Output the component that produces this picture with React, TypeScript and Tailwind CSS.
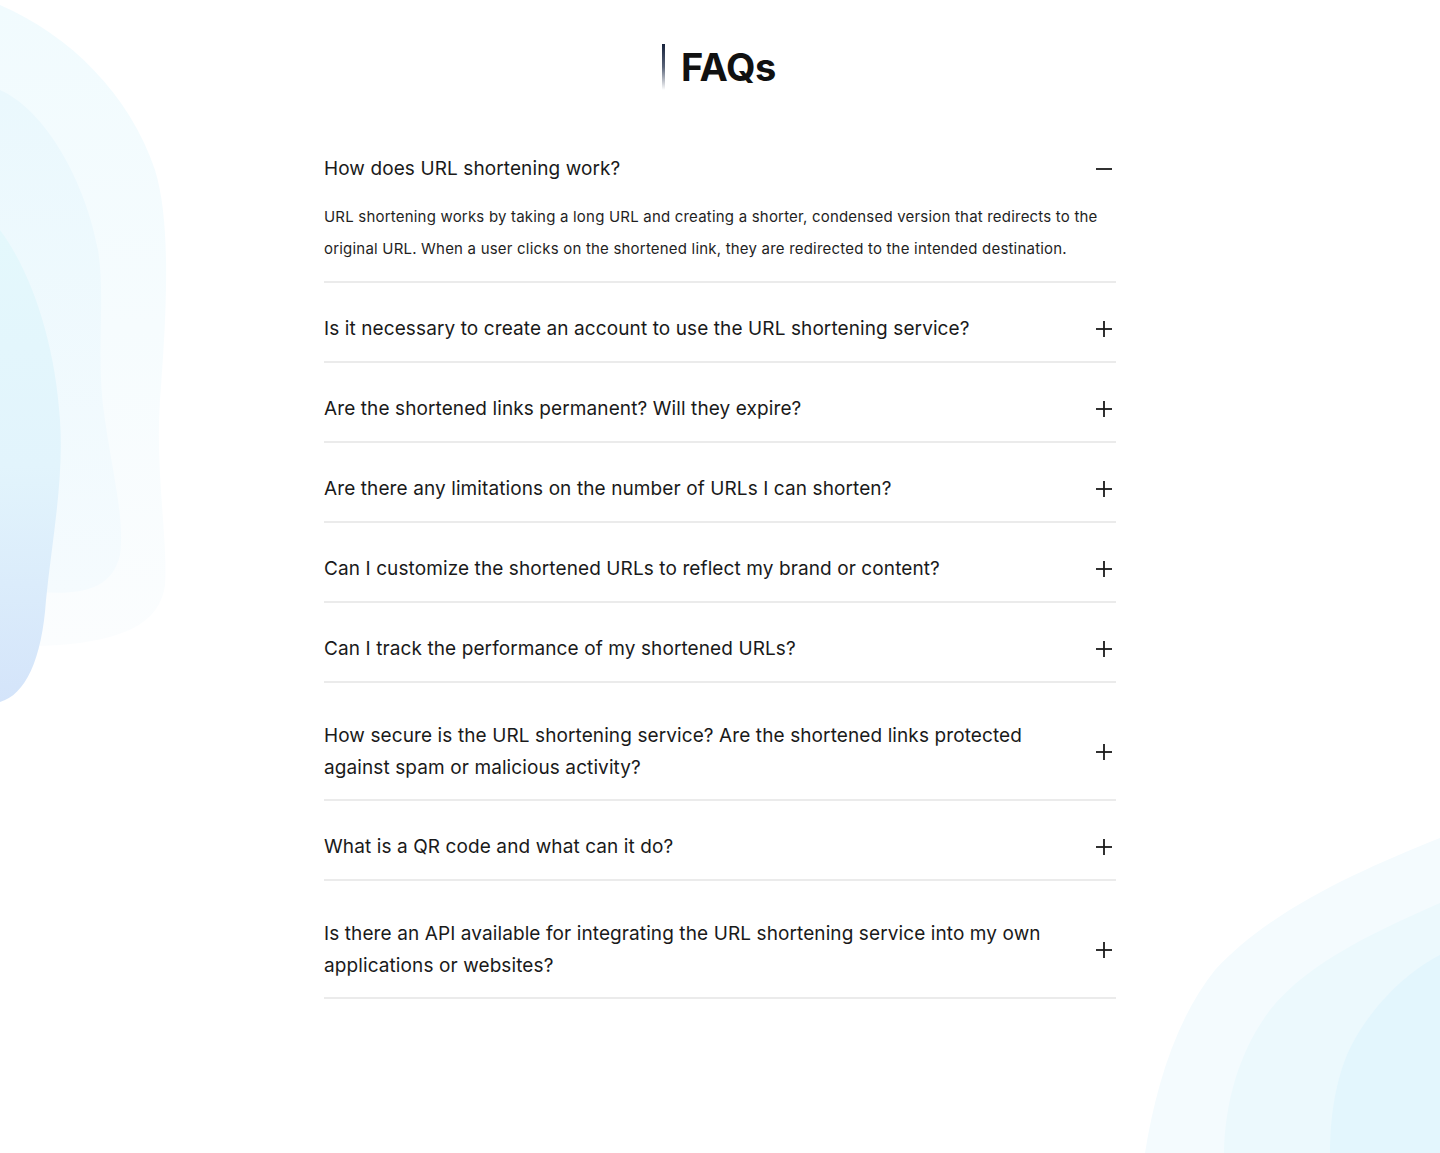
import { useState } from 'react';

type Faq = { q: string; a?: string; tall?: boolean };

const faqs: Faq[] = [
  {
    q: 'How does URL shortening work?',
    a: 'URL shortening works by taking a long URL and creating a shorter, condensed version that redirects to the original URL. When a user clicks on the shortened link, they are redirected to the intended destination.',
  },
  { q: 'Is it necessary to create an account to use the URL shortening service?' },
  { q: 'Are the shortened links permanent? Will they expire?' },
  { q: 'Are there any limitations on the number of URLs I can shorten?' },
  { q: 'Can I customize the shortened URLs to reflect my brand or content?' },
  { q: 'Can I track the performance of my shortened URLs?' },
  {
    q: 'How secure is the URL shortening service? Are the shortened links protected against spam or malicious activity?',
    tall: true,
  },
  { q: 'What is a QR code and what can it do?' },
  {
    q: 'Is there an API available for integrating the URL shortening service into my own applications or websites?',
    tall: true,
  },
];

const PlusIcon = ({ open }: { open: boolean }) => (
  <svg
    className="shrink-0"
    width="18"
    height="18"
    viewBox="0 0 18 18"
    fill="none"
    stroke="#1a1a1a"
    strokeWidth="1.8"
  >
    <path d="M1 9h16" />
    {!open && <path d="M9 1v16" />}
  </svg>
);

const LeftBlobs = () => (
  <svg className="absolute left-0 top-0" width="170" height="710" viewBox="0 0 170 710" fill="none">
    <defs>
      <linearGradient id="lbOuter" x1="0" y1="0" x2="0" y2="1">
        <stop offset="0" stopColor="#f1fbfe" />
        <stop offset="1" stopColor="#fbfdfe" />
      </linearGradient>
      <linearGradient id="lbMid" x1="0" y1="0" x2="0" y2="1">
        <stop offset="0" stopColor="#eaf8fd" />
        <stop offset="1" stopColor="#f5fbfe" />
      </linearGradient>
      <linearGradient id="lbInner" x1="0" y1="0" x2="0" y2="1">
        <stop offset="0" stopColor="#e4f8fc" />
        <stop offset="0.5" stopColor="#e2f4fc" />
        <stop offset="1" stopColor="#d4e4fa" />
      </linearGradient>
    </defs>
    <path
      d="M0 5C70 35 130 95 155 170C172 225 166 320 160 400C155 470 168 540 165 585C160 625 120 640 60 645L0 648Z"
      fill="url(#lbOuter)"
    />
    <path
      d="M0 90C45 110 85 180 98 250C106 300 95 360 105 420C112 470 125 520 120 555C112 590 80 595 40 592L0 590Z"
      fill="url(#lbMid)"
    />
    <path
      d="M0 230C30 270 55 340 60 420C64 480 52 540 46 600C42 660 25 695 0 702Z"
      fill="url(#lbInner)"
    />
  </svg>
);

const RightBlobs = () => (
  <svg className="absolute bottom-0 right-0" width="300" height="320" viewBox="1140 833 300 320" fill="none">
    <path d="M1440 838C1360 870 1270 910 1215 970C1175 1020 1155 1090 1145 1153L1440 1153Z" fill="#f4fbfe" />
    <path d="M1440 903C1380 930 1310 960 1270 1010C1240 1050 1225 1100 1224 1153L1440 1153Z" fill="#ecf9fd" />
    <path d="M1440 955C1400 975 1360 1020 1345 1060C1332 1095 1330 1130 1330 1153L1440 1153Z" fill="#e3f6fd" />
  </svg>
);

export default function App() {
  const [open, setOpen] = useState<number | null>(0);

  return (
    <div className="relative min-h-[1153px] overflow-hidden bg-white font-['Inter','Noto_Sans',sans-serif] text-[#1a1a1a]">
      <LeftBlobs />
      <RightBlobs />

      <main className="relative mx-auto w-[792px] pt-[44px]">
        {/* Heading */}
        <div className="flex items-center justify-center gap-[16px] pr-[2px]">
          <span className="h-[46px] w-[3px] bg-gradient-to-b from-[#17223b] via-[#5a6478] to-transparent" />
          <h2 className="text-[38px] font-bold leading-[46px] tracking-[-0.4px] text-[#111]">FAQs</h2>
        </div>

        {/* Accordion */}
        <div className="mt-[33px]">
          {faqs.map((item, i) => {
            const isOpen = open === i;
            return (
              <div key={item.q} className="border-b-2 border-[#ebebeb]">
                <button
                  onClick={() => setOpen(isOpen ? null : i)}
                  className={`flex w-full items-center justify-between gap-10 pr-[3px] text-left ${
                    item.tall ? 'pt-[37px] pb-[15px]' : 'pt-[30px] pb-[16px]'
                  }`}
                >
                  <span className="max-w-[740px] text-[19px] leading-[32px] tracking-[0.1px]">{item.q}</span>
                  <PlusIcon open={isOpen} />
                </button>
                {isOpen && item.a && (
                  <p className="pb-[16px] pr-[10px] text-[15px] leading-[32px] tracking-[0.2px] text-[#1f1f1f]">
                    {item.a}
                  </p>
                )}
              </div>
            );
          })}
        </div>
      </main>
    </div>
  );
}
